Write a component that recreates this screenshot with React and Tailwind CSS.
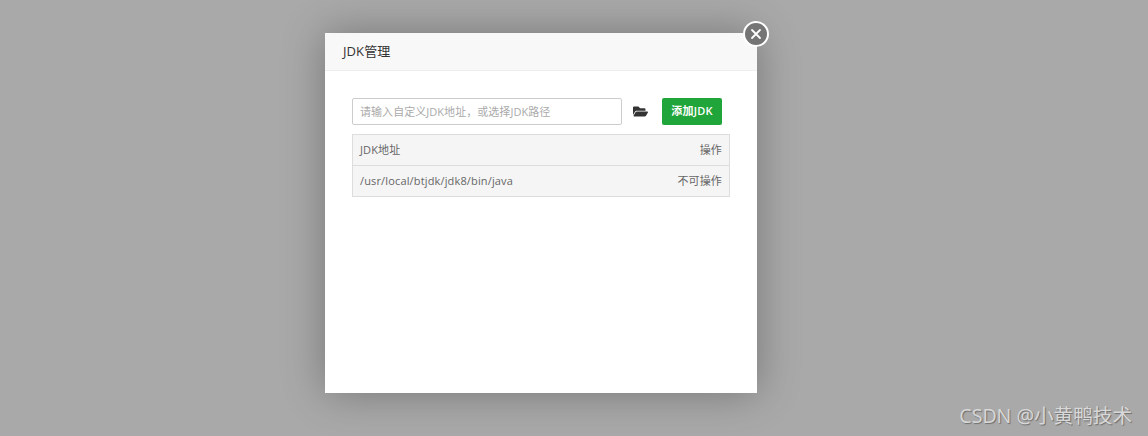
import { FaFolderOpen } from 'react-icons/fa'

const font = { cn: 'font-["Open_Sans","Noto_Sans_CJK_SC",sans-serif]' }

export default function App() {
  return (
    <div className={`relative h-[436px] w-[1148px] overflow-hidden bg-[#a9a9a9] pl-[325px] pt-[33px] ${font.cn}`}>
      {/* Dialog */}
      <div className="relative h-[360px] w-[432px] bg-white shadow-[0_0_40px_rgba(0,0,0,0.3)]">
        <div className="flex h-[38px] items-center border-b border-[#eeeeee] bg-[#f8f8f8] pl-[18px] text-[13px] tracking-[0.1px] text-[#333333]">
          JDK管理
        </div>

        <button className="absolute -right-[12px] -top-[12px] flex h-[26px] w-[26px] items-center justify-center rounded-full border-[2.5px] border-white bg-[#757575]">
          <svg width="12" height="12" viewBox="0 0 12 12" fill="none" stroke="white" strokeWidth="1.8" strokeLinecap="round">
            <path d="M2 2L10 10M10 2L2 10" />
          </svg>
        </button>

        <div className="pl-[27px] pr-[27px] pt-[27px]">
          <div className="flex items-center">
            <input
              readOnly
              placeholder="请输入自定义JDK地址，或选择JDK路径"
              className="h-[27px] w-[270px] rounded-[2px] border border-[#cccccc] bg-white px-[7px] text-[11px] tracking-[0.05px] outline-none placeholder:text-[#aaaaaa]"
            />
            <FaFolderOpen className="ml-[11px] text-[15px] text-[#333333]" />
            <button className="ml-[14px] h-[27px] w-[60px] rounded-[2px] bg-[#20a53a] text-[11px] font-semibold tracking-[0.2px] text-white">
              添加JDK
            </button>
          </div>

          <div className="mt-[9px] border border-[#dddddd] bg-[#f5f5f5] text-[11px] tracking-[0.15px] text-[#666666]">
            <div className="flex h-[31px] items-center justify-between border-b border-[#dddddd] px-[7px]">
              <span>JDK地址</span>
              <span>操作</span>
            </div>
            <div className="flex h-[30px] items-center justify-between px-[7px]">
              <span>/usr/local/btjdk/jdk8/bin/java</span>
              <span>不可操作</span>
            </div>
          </div>
        </div>
      </div>

      <div className="absolute bottom-[8px] right-[16px] text-[19.6px] leading-[24px] text-[#d8d8d8] [text-shadow:1px_1px_1px_rgba(0,0,0,0.35)]">
        CSDN @小黄鸭技术
      </div>
    </div>
  )
}
